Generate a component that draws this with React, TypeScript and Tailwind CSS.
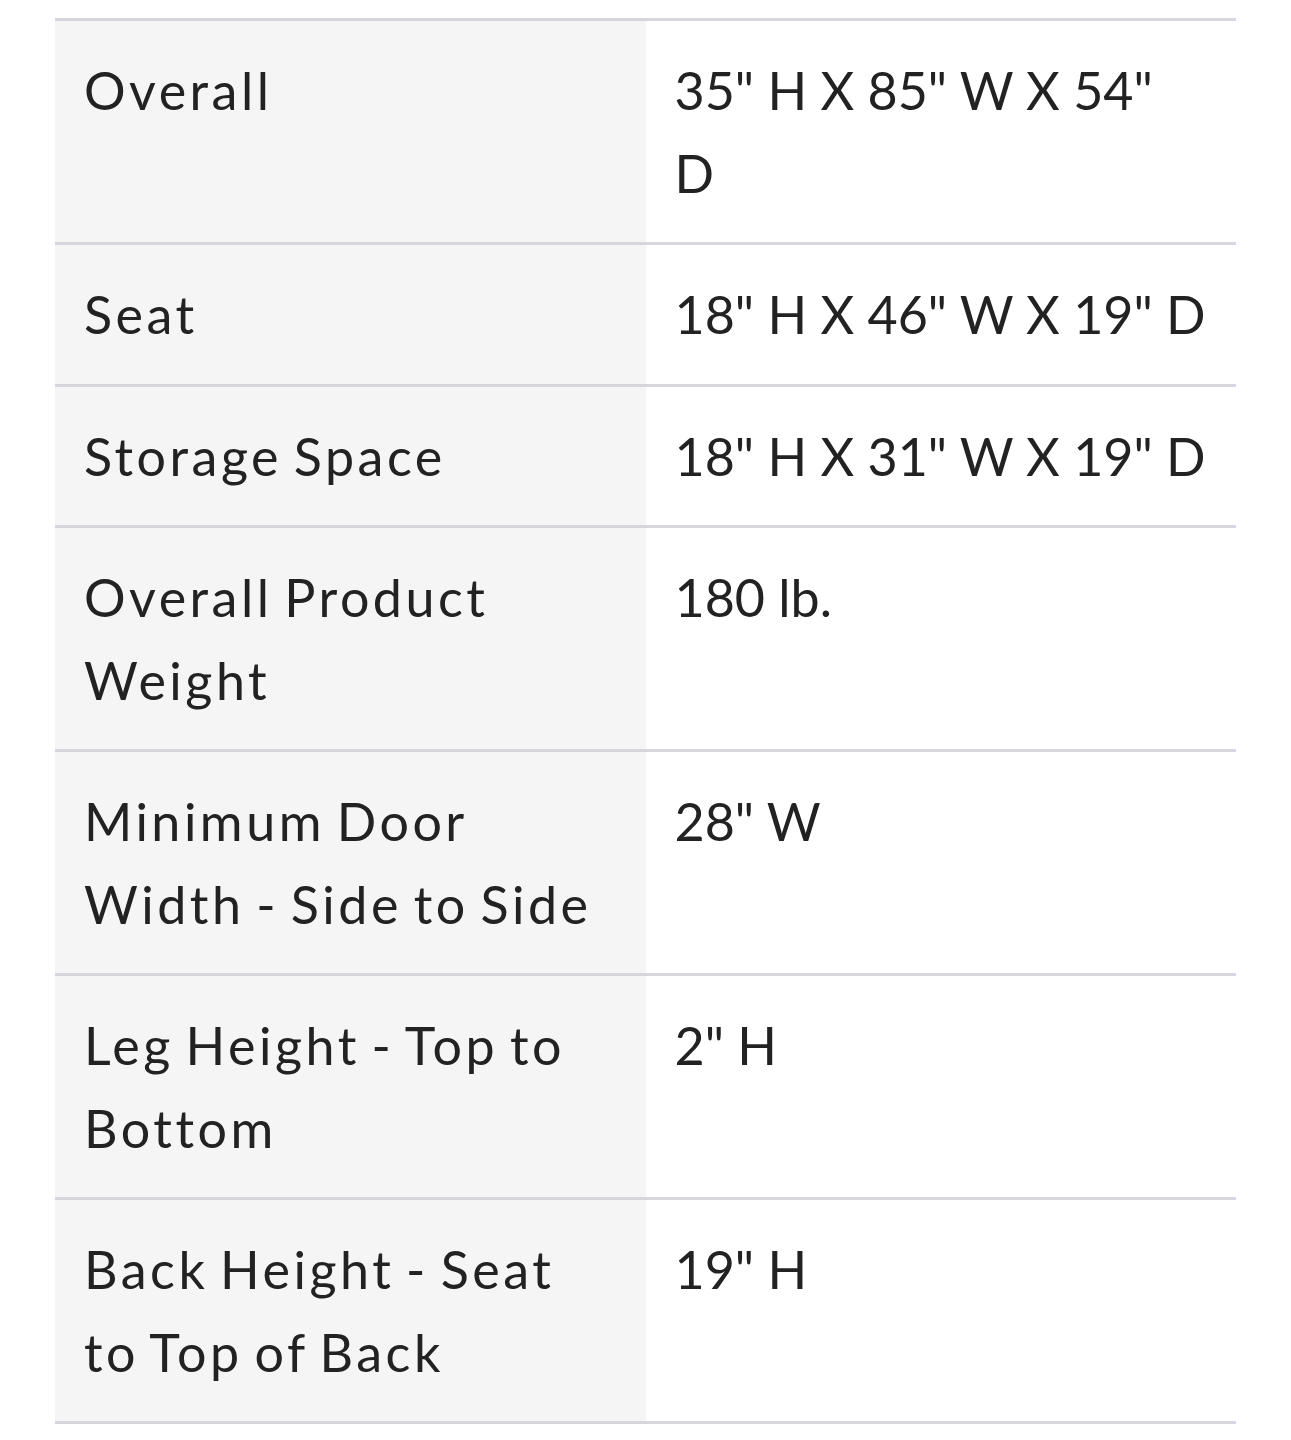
import { Fragment } from 'react';

// both cells keep the reference's line breaks (font metrics differ from the original)
const rows: [string[], string[]][] = [
  [['Overall'], ['35" H X 85" W X 54"', 'D']],
  [['Seat'], ['18" H X 46" W X 19" D']],
  [['Storage Space'], ['18" H X 31" W X 19" D']],
  [['Overall Product', 'Weight'], ['180 lb.']],
  [['Minimum Door', 'Width - Side to Side'], ['28" W']],
  [['Leg Height - Top to', 'Bottom'], ['2" H']],
  [['Back Height - Seat', 'to Top of Back'], ['19" H']],
];

function Lines({ lines }: { lines: string[] }) {
  return (
    <>
      {lines.map((line, i) => (
        <Fragment key={i}>
          {i > 0 && <br />}
          {line}
        </Fragment>
      ))}
    </>
  );
}

export default function App() {
  return (
    <div className="min-h-screen bg-white pt-[18px] px-[55px] font-['Lato','Open_Sans',sans-serif] text-[#222222]">
      <div className="border-t-[3px] border-[#d6d6de]">
        {rows.map(([label, value]) => (
          <div key={label.join(' ')} className="grid grid-cols-2 border-b-[3px] border-[#d6d6de]">
            <div className="bg-[#f5f5f5] px-[29px] py-[28px] text-[52px] leading-[82.5px] tracking-[3.5px] [word-spacing:-5px] whitespace-nowrap">
              <Lines lines={label} />
            </div>
            <div className="bg-white px-[29px] py-[28px] text-[52px] leading-[82.5px] whitespace-nowrap">
              <Lines lines={value} />
            </div>
          </div>
        ))}
      </div>
    </div>
  );
}
